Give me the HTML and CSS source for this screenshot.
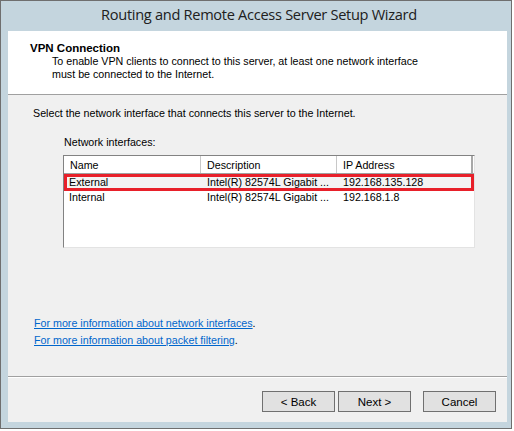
FILE: index.html
```html
<!DOCTYPE html>
<html>
<head>
<meta charset="utf-8">
<link rel="stylesheet" href="styles.css">
</head>
<body>
<div class="window">
  <div class="titlebar">Routing and Remote Access Server Setup Wizard</div>
  <div class="client">
    <div class="header">
      <div class="h-title">VPN Connection</div>
      <div class="h-sub">To enable VPN clients to connect to this server, at least one network interface<br>must be connected to the Internet.</div>
    </div>
    <div class="body">
      <div class="intro">Select the network interface that connects this server to the Internet.</div>
      <div class="label">Network interfaces:</div>
      <div class="list">
        <div class="list-head">
          <div class="col c1">Name</div>
          <div class="col c2">Description</div>
          <div class="col c3">IP Address</div>
        </div>
        <div class="row sel">
          <div class="cell c1">External</div>
          <div class="cell c2">Intel(R) 82574L Gigabit ...</div>
          <div class="cell c3">192.168.135.128</div>
        </div>
        <div class="row">
          <div class="cell c1">Internal</div>
          <div class="cell c2">Intel(R) 82574L Gigabit ...</div>
          <div class="cell c3">192.168.1.8</div>
        </div>
        <div class="mark"></div>
      </div>
      <div class="links">
        <div class="link-line"><a class="link">For more information about network interfaces</a>.</div>
        <div class="link-line"><a class="link">For more information about packet filtering</a>.</div>
      </div>
    </div>
    <div class="footer">
      <button class="btn">&lt; Back</button>
      <button class="btn">Next &gt;</button>
      <button class="btn cancel">Cancel</button>
    </div>
  </div>
</div>
</body>
</html>
```
FILE: styles.css
```css
html, body {
  margin: 0;
  padding: 0;
  background: #ffffff;
}
.window {
  box-sizing: border-box;
  width: 512px;
  height: 429px;
  border: 1px solid #6f6f6f;
  background: #c4d5de;
  padding: 0 4px 6px 7px;
  display: flex;
  flex-direction: column;
}
.titlebar {
  height: 30px;
  line-height: 27px;
  text-align: center;
  font-family: "Open Sans", sans-serif;
  font-size: 14.6px;
  color: #202020;
  letter-spacing: -0.3px;
  padding-left: 3px;
}
.client {
  flex: 1;
  display: flex;
  flex-direction: column;
  background: #f0f0f0;
  font-family: "Liberation Sans", Arial, sans-serif;
  font-size: 10.7px;
  line-height: 13px;
  color: #000;
}
.header {
  height: 64px;
  box-sizing: border-box;
  background: #ffffff;
  border-bottom: 1px solid #a0a0a0;
  padding: 11px 0 0 22px;
}
.h-title {
  font-weight: bold;
  font-size: 11.5px;
}
.h-sub {
  padding-left: 22px;
}
.body {
  flex: 1;
  padding: 12px 0 0 25px;
  border-bottom: 1px solid #a0a0a0;
}
.label {
  margin: 16px 0 0 31px;
}
.list {
  position: relative;
  margin: 6px 0 0 30px;
  width: 412px;
  height: 93px;
  box-sizing: border-box;
  background: #ffffff;
  border-top: 1px solid #828282;
  border-left: 1px solid #828282;
  border-right: 1px solid #e3e3e3;
  border-bottom: 1px solid #e3e3e3;
}
.list-head {
  display: flex;
  height: 18px;
  box-sizing: border-box;
  border-bottom: 1px solid #a0a0a0;
  padding-top: 3px;
  line-height: 13px;
}
.col {
  box-sizing: border-box;
  padding-left: 6px;
  border-right: 1px solid #c8c8c8;
  margin-top: -3px;
  padding-top: 3px;
}
.c1 { width: 137px; }
.c2 { width: 136px; }
.c3 { width: 136px; }
.col.c3 { border-right: 2px solid #a8a8a8; width: 136px; }
.row {
  display: flex;
  height: 15px;
  line-height: 15px;
}
.row.sel {
  background: #f3f3f3;
  padding-top: 1px;
}
.cell {
  box-sizing: border-box;
  padding-left: 6px;
  white-space: nowrap;
}
.cell.c1 { padding-left: 5px; }
.mark {
  position: absolute;
  left: 0;
  top: 18px;
  width: 410px;
  height: 17px;
  box-sizing: border-box;
  border: 3px solid #e8202a;
}
.links {
  margin: 69px 0 0 1px;
}
.link-line {
  height: 17px;
}
.link {
  color: #0066cc;
  text-decoration: underline;
}
.footer {
  height: 45px;
  box-sizing: border-box;
  padding: 13px 11px 0 0;
  display: flex;
  justify-content: flex-end;
  border-top: 1px solid #ffffff;
}
.btn {
  width: 73px;
  height: 21px;
  box-sizing: border-box;
  margin: 0 0 0 3px;
  padding: 0;
  background: #e1e1e1;
  border: 1px solid #707070;
  border-radius: 0;
  font-family: "Liberation Sans", Arial, sans-serif;
  font-size: 11.5px;
  color: #000;
}
.btn.cancel {
  margin-left: 12px;
}
```
